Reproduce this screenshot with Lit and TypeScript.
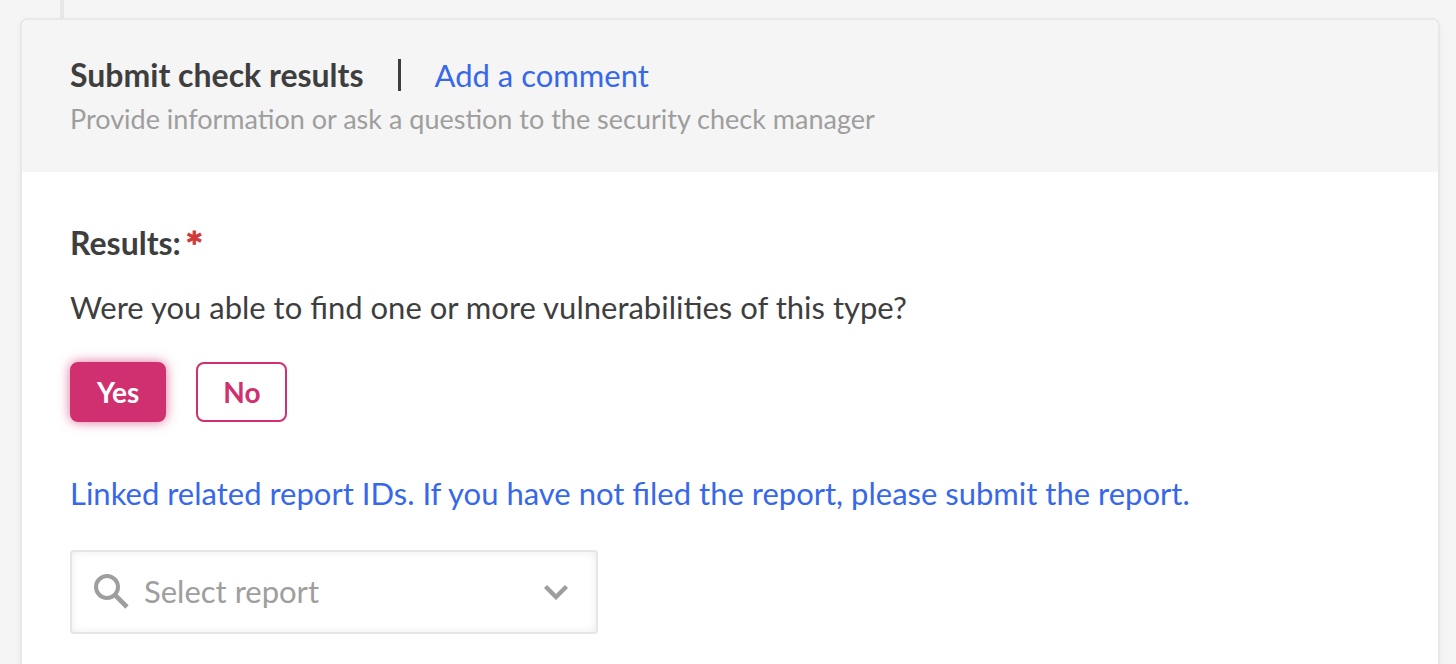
import { LitElement, html, css } from "lit";
import { customElement, state } from "lit/decorators.js";

@customElement("app-root")
export class AppRoot extends LitElement {
  @state() private found = true;

  static styles = css`
    :host {
      display: block;
      min-height: 100vh;
      box-sizing: border-box;
      overflow: hidden;
      background: #f5f5f5;
      color: #3e3e3e;
      font-family: Lato, "Noto Sans", sans-serif;
      font-size: 31px;
      line-height: 44px;
    }
    .timeline {
      width: 4px;
      height: 20px;
      margin-left: 60px;
      background: #e8e8e8;
    }
    .card {
      margin: 0 18px 0 22px;
      min-height: calc(100vh - 12px);
      border-radius: 6px 6px 0 0;
      background: #fff;
      box-shadow: 0 0 0 2px #e8e8e8, 0 2px 8px rgba(0, 0, 0, 0.08);
    }
    .header {
      padding: 33px 48px 31px;
      border-radius: 8px 8px 0 0;
      background: #f5f5f5;
    }
    .tabs {
      display: flex;
      align-items: center;
    }
    .title,
    .label {
      margin: 0;
      font-size: 32px;
      font-weight: 700;
    }
    .divider {
      width: 3px;
      height: 32px;
      margin: 0 34px;
      background: #3e3e3e;
    }
    a {
      color: #3768ea;
      text-decoration: none;
    }
    p {
      margin: 0;
    }
    .hint {
      color: #9e9e9e;
      font-size: 27px;
    }
    .body {
      display: flex;
      flex-direction: column;
      align-items: flex-start;
      padding: 49px 48px;
    }
    .label {
      display: flex;
      gap: 6px;
    }
    .required {
      color: #d03a3a;
      font-family: "DejaVu Sans", sans-serif;
      font-size: 28px;
      -webkit-text-stroke: 1px #d03a3a;
    }
    .question {
      margin-top: 20px;
    }
    .answers {
      display: flex;
      gap: 30px;
      margin: 33px 0 49px;
    }
    .answer {
      height: 60px;
      min-width: 88px;
      padding: 0 25px;
      border: 2px solid #d0306f;
      border-radius: 8px;
      background: #fff;
      color: #d0306f;
      font: inherit;
      font-size: 28px;
      font-weight: 700;
      cursor: pointer;
    }
    .answer.selected {
      background: #d0306f;
      color: #fff;
      box-shadow: 0 0 12px rgba(208, 48, 111, 0.7);
    }
    .picker {
      display: grid;
      align-items: center;
      width: 528px;
      max-width: 100%;
      margin-top: 35px;
    }
    .picker > * {
      grid-area: 1 / 1;
    }
    .select {
      width: 100%;
      height: 84px;
      padding: 0 72px 2px;
      border: 2px solid #e6e6e6;
      border-radius: 4px;
      background: #fff;
      box-shadow: inset 0 0 8px rgba(0, 0, 0, 0.08);
      color: #9e9e9e;
      font: inherit;
      appearance: none;
    }
    .icon {
      z-index: 1;
      fill: none;
      stroke: #9e9e9e;
      pointer-events: none;
    }
    .search {
      margin-left: 24px;
    }
    .chevron {
      justify-self: end;
      margin-right: 29px;
    }
  `;

  render() {
    return html`
      <div class="timeline"></div>
      <main class="card">
        <header class="header">
          <div class="tabs">
            <h1 class="title">Submit check results</h1>
            <span class="divider"></span>
            <a href="#comment">Add a comment</a>
          </div>
          <p class="hint">Provide information or ask a question to the security check manager</p>
        </header>
        <section class="body">
          <h2 class="label">Results: <span class="required">*</span></h2>
          <p class="question" id="question">Were you able to find one or more vulnerabilities of this type?</p>
          <div class="answers" role="group" aria-labelledby="question">
            <button
              type="button"
              class="answer ${this.found ? "selected" : ""}"
              aria-pressed=${this.found}
              @click=${() => (this.found = true)}
            >Yes</button>
            <button
              type="button"
              class="answer ${this.found ? "" : "selected"}"
              aria-pressed=${!this.found}
              @click=${() => (this.found = false)}
            >No</button>
          </div>
          <a href="#submit" id="reports">Linked related report IDs. If you have not filed the report, please submit the report.</a>
          <div class="picker">
            <select class="select" aria-labelledby="reports">
              <option>Select report</option>
            </select>
            <svg class="icon search" width="36" height="36" viewBox="0 0 36 36" aria-hidden="true">
              <circle cx="13" cy="13" r="11" stroke-width="4" />
              <path d="M20.5 20.5 L23.5 23.5" stroke-width="3" />
              <path d="M22 22 L33 33" stroke-width="4.6" />
            </svg>
            <svg class="icon chevron" width="26" height="16" viewBox="0 0 26 16" aria-hidden="true">
              <path d="M2.5 2.5 L13 13 L23.5 2.5" stroke-width="4.4" />
            </svg>
          </div>
        </section>
      </main>
    `;
  }
}
